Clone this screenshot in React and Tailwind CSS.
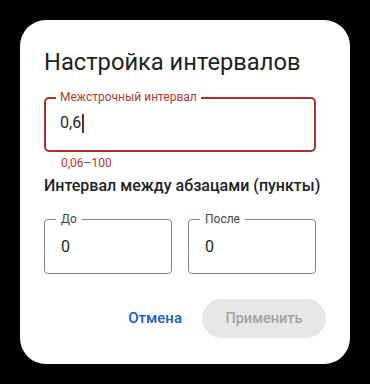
export default function App() {
  return (
    <div className="h-[384px] w-[370px] bg-black pt-[20px] pl-[20px] font-['Roboto',sans-serif]">
      <div className="flex h-[344px] w-[330px] flex-col rounded-[26px] bg-white pl-[24px] pr-[24px] pt-[28px]">
        <h1 className="text-[23.7px] leading-[28px] text-[#1f1f1f]">Настройка интервалов</h1>

        <div className="relative mt-[21px] h-[55px] w-[272px] rounded-[5px] border-[2.5px] border-[#a8322a] pl-[14px] pt-[12px]">
          <span className="absolute -top-[10px] left-[10px] bg-white px-[4px] text-[12px] leading-[16px] text-[#b03a33]">
            Межстрочный интервал
          </span>
          <div className="flex items-center text-[16px] leading-[24px] text-[#1f1f1f]">
            0,6
            <span className="ml-[1px] h-[19px] w-[1.5px] bg-[#7a2520]" />
          </div>
        </div>
        <p className="mt-[3px] pl-[17px] text-[12px] leading-[16px] text-[#b03a33]">0,06–100</p>

        <h2 className="mt-[5px] text-[16px] font-medium leading-[20px] text-[#1f1f1f]">
          Интервал между абзацами (пункты)
        </h2>

        <div className="mt-[23px] flex w-[272px] gap-[16px]">
          {["До", "После"].map((label) => (
            <div
              key={label}
              className="relative h-[55px] w-[128px] rounded-[4px] border border-[#80868b] pl-[16px] pt-[15px]"
            >
              <span className="absolute -top-[9px] left-[11px] bg-white px-[5px] text-[12px] leading-[16px] text-[#444746]">
                {label}
              </span>
              <div className="text-[16px] leading-[24px] text-[#1f1f1f]">0</div>
            </div>
          ))}
        </div>

        <div className="mt-[25px] flex items-center justify-end gap-[20px]">
          <button type="button" className="text-[15px] font-medium text-[#1b5cc0]">
            Отмена
          </button>
          <button
            type="button"
            className="h-[39px] w-[124px] rounded-full bg-[#e7e7e7] text-[14.5px] font-medium text-[#a3a3a3]"
          >
            Применить
          </button>
        </div>
      </div>
    </div>
  );
}
